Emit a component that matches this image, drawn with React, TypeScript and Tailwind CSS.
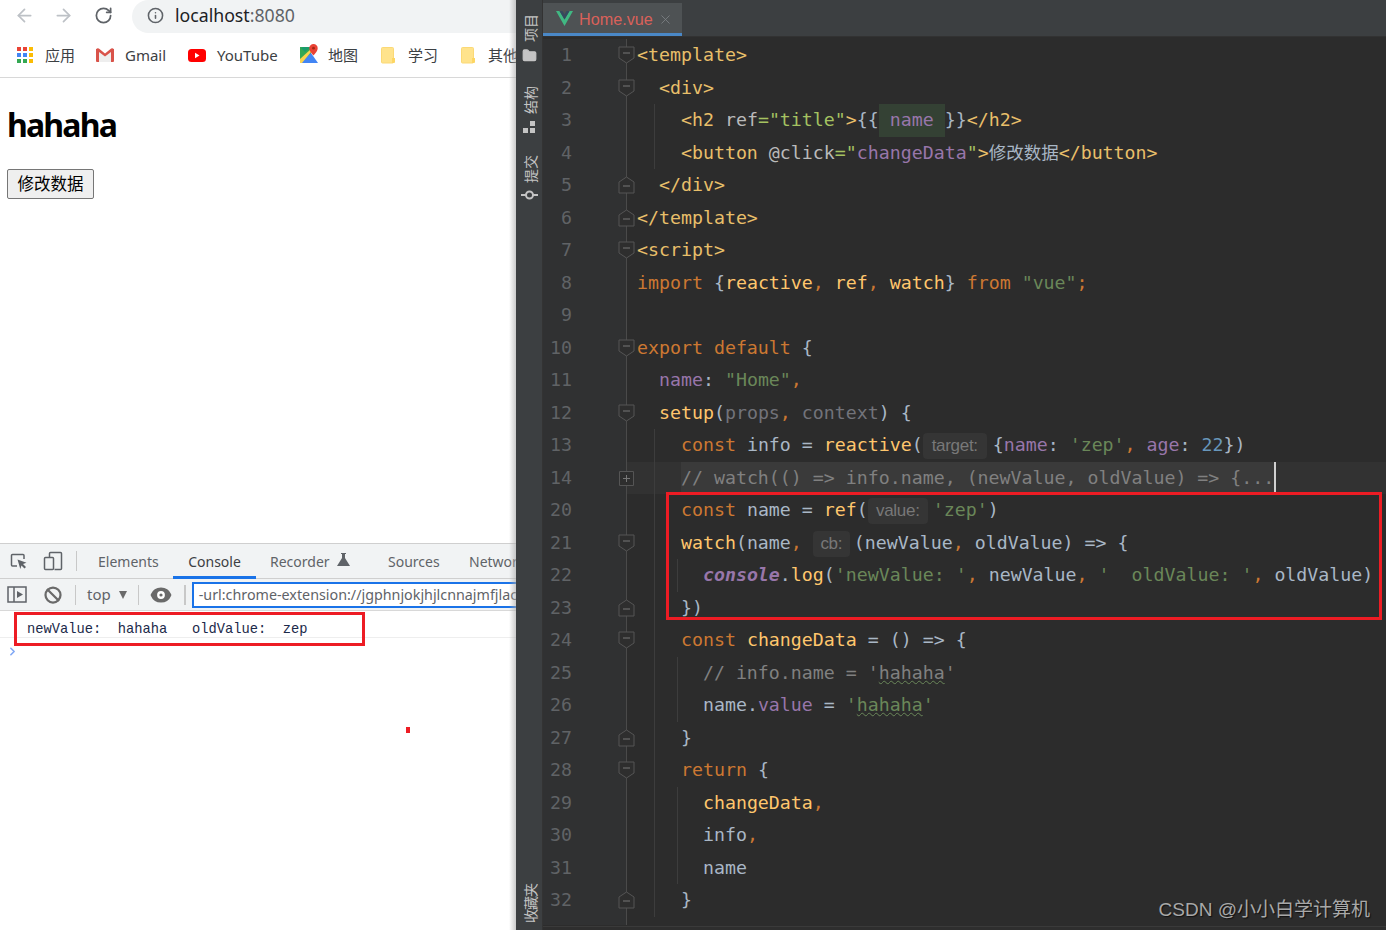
import React from "react";
import { ArrowLeft, ArrowRight, RotateCw, Info, Ban, Eye, ChevronRight, X, Folder } from "lucide-react";

const tag = "text-[#e8bf6a]";
const attr = "text-[#bababa]";
const htmlStr = "text-[#a5c261]";
const kw = "text-[#cc7832]";
const id = "text-[#a9b7c6]";
const fn = "text-[#ffc66d]";
const str = "text-[#6a8759]";
const prop = "text-[#9876aa]";
const num = "text-[#6897bb]";
const dim = "text-[#72737a]";
const cmt = "text-[#808080]";

type Tok = [string, string] | { hint: string; w: string };
type Row = {
  n: number;
  fold?: "open" | "close" | "plus";
  g1?: boolean;
  g2?: boolean;
  active?: boolean;
  toks: Tok[];
};

const rows: Row[] = [
  { n: 1, fold: "open", toks: [["<template>", tag]] },
  { n: 2, fold: "open", toks: [["  <div>", tag]] },
  {
    n: 3,
    g1: true,
    toks: [
      ["    <h2 ", tag],
      ["ref", attr],
      ["=", htmlStr],
      ['"title"', htmlStr],
      [">", tag],
      ["{{", id],
      [" name ", "inline-block h-[32.5px] leading-[32.5px] bg-[#344134] text-[#9876aa]"],
      ["}}", id],
      ["</h2>", tag],
    ],
  },
  {
    n: 4,
    g1: true,
    toks: [
      ["    <button ", tag],
      ["@click", attr],
      ["=", htmlStr],
      ['"', htmlStr],
      ["changeData", prop],
      ['"', htmlStr],
      [">", tag],
      ["修改数据", id + " text-[17.5px]"],
      ["</button>", tag],
    ],
  },
  { n: 5, fold: "close", toks: [["  </div>", tag]] },
  { n: 6, fold: "close", toks: [["</template>", tag]] },
  { n: 7, fold: "open", toks: [["<script>", tag]] },
  {
    n: 8,
    toks: [
      ["import ", kw],
      ["{", id],
      ["reactive", fn],
      [", ", kw],
      ["ref", fn],
      [", ", kw],
      ["watch", fn],
      ["}", id],
      [" from ", kw],
      ['"vue"', str],
      [";", kw],
    ],
  },
  { n: 9, toks: [] },
  { n: 10, fold: "open", toks: [["export default ", kw], ["{", id]] },
  { n: 11, toks: [["  ", id], ["name", prop], [": ", id], ['"Home"', str], [",", kw]] },
  {
    n: 12,
    fold: "open",
    toks: [
      ["  ", id],
      ["setup", fn],
      ["(", id],
      ["props", dim],
      [", ", kw],
      ["context", dim],
      [") {", id],
    ],
  },
  {
    n: 13,
    g1: true,
    toks: [
      ["    ", id],
      ["const ", kw],
      ["info = ", id],
      ["reactive", fn],
      ["(", id],
      { hint: "target:", w: "w-[64px] mr-[6px]" },
      ["{", id],
      ["name", prop],
      [": ", id],
      ["'zep'", str],
      [", ", kw],
      ["age", prop],
      [": ", id],
      ["22", num],
      ["})", id],
    ],
  },
  {
    n: 14,
    fold: "plus",
    g1: true,
    active: true,
    toks: [
      ["    ", id],
      [
        "// watch(() => info.name, (newValue, oldValue) => {...",
        "inline-block h-[32.5px] leading-[32.5px] bg-[#3a3a3a] text-[#808080] border-r-2 border-r-[#d0d0d0]",
      ],
    ],
  },
  {
    n: 20,
    g1: true,
    toks: [
      ["    ", id],
      ["const ", kw],
      ["name = ", id],
      ["ref", fn],
      ["(", id],
      { hint: "value:", w: "w-[60px] mr-[5px]" },
      ["'zep'", str],
      [")", id],
    ],
  },
  {
    n: 21,
    fold: "open",
    g1: true,
    toks: [
      ["    ", id],
      ["watch", fn],
      ["(name", id],
      [", ", kw],
      { hint: "cb:", w: "w-[37px] mr-[4px]" },
      ["(newValue", id],
      [", ", kw],
      ["oldValue) => {", id],
    ],
  },
  {
    n: 22,
    g1: true,
    g2: true,
    toks: [
      ["      ", id],
      ["console", "text-[#9876aa] italic font-bold"],
      [".", id],
      ["log", fn],
      ["(", id],
      ["'newValue: '", str],
      [", ", kw],
      ["newValue", id],
      [", ", kw],
      ["'  oldValue: '", str],
      [", ", kw],
      ["oldValue)", id],
    ],
  },
  { n: 23, fold: "close", g1: true, toks: [["    })", id]] },
  {
    n: 24,
    fold: "open",
    g1: true,
    toks: [["    ", id], ["const ", kw], ["changeData", fn], [" = () => {", id]],
  },
  {
    n: 25,
    g1: true,
    g2: true,
    toks: [
      ["      // info.name = ", cmt],
      ["'", cmt],
      ["hahaha", "text-[#808080] underline decoration-wavy decoration-[#6a8759] decoration-1"],
      ["'", cmt],
    ],
  },
  {
    n: 26,
    g1: true,
    g2: true,
    toks: [
      ["      name", id],
      [".", id],
      ["value", prop],
      [" = ", id],
      ["'", str],
      ["hahaha", "text-[#6a8759] underline decoration-wavy decoration-[#6a8759] decoration-1"],
      ["'", str],
    ],
  },
  { n: 27, fold: "close", g1: true, toks: [["    }", id]] },
  { n: 28, fold: "open", g1: true, toks: [["    ", id], ["return ", kw], ["{", id]] },
  { n: 29, g1: true, g2: true, toks: [["      ", id], ["changeData", fn], [",", kw]] },
  { n: 30, g1: true, g2: true, toks: [["      info", id], [",", kw]] },
  { n: 31, g1: true, g2: true, toks: [["      name", id]] },
  { n: 32, fold: "close", g1: true, toks: [["    }", id]] },
];

function FoldMark({ kind }: { kind: "open" | "close" | "plus" }) {
  return (
    <svg width="17" height="20" viewBox="0 0 17 20" className="absolute left-[-8px] top-[6px]">
      {kind === "open" && <path d="M1 2h15v11l-7.5 5L1 13z" fill="#2e2e2e" stroke="#555" />}
      {kind === "close" && <path d="M1 18h15V7L8.5 2 1 7z" fill="#2e2e2e" stroke="#555" />}
      {kind === "plus" && <path d="M1.500 3.500h14v14h-14z" fill="#2e2e2e" stroke="#555" />}
      <path d={kind === "open" ? "M5 8h7" : kind === "close" ? "M5 11h7" : "M5 10.500h7"} stroke="#777" />
      {kind === "plus" && <path d="M8.500 7v7" stroke="#777" />}
    </svg>
  );
}

function CodeRow({ row }: { row: Row }) {
  return (
    <div className="flex h-[32.5px] shrink-0 leading-[32.5px]">
      <div className="w-[83px] shrink-0 bg-[#303132] text-[#606366]">
        <div className="w-[29px] text-right">{row.n}</div>
      </div>
      <div className={"relative flex-1 pl-[11px] whitespace-pre " + (row.active ? "bg-[#323232]" : "")}>
        <div className="absolute left-0 top-0 h-full w-px bg-[#4a4a4a]" />
        {row.fold && <FoldMark kind={row.fold} />}
        {row.g1 && <div className="absolute left-[28px] top-0 h-full w-px bg-[#3d3d3d]" />}
        {row.g2 && <div className="absolute left-[51px] top-0 h-full w-px bg-[#3d3d3d]" />}
        <span className="relative">
          {row.toks.map((t, i) =>
            Array.isArray(t) ? (
              <span key={i} className={t[1]}>
                {t[0]}
              </span>
            ) : (
              <span
                key={i}
                className={
                  "inline-block h-[26px] rounded-[4px] bg-[#353535] text-center align-middle font-['Liberation_Sans',sans-serif] text-[17px] leading-[26px] tracking-[-0.3px] text-[#787878] " +
                  t.w
                }
              >
                {t.hint}
              </span>
            ),
          )}
        </span>
      </div>
    </div>
  );
}

function SideLabel({ text, className }: { text: string; className?: string }) {
  return (
    <div
      className={
        "translate-x-[1px] rotate-180 font-['Noto_Sans_CJK_SC',sans-serif] text-[14px] leading-[16px] text-[#c4c4c4] [text-orientation:sideways] [writing-mode:vertical-rl] " +
        (className ?? "")
      }
    >
      {text}
    </div>
  );
}

function FolderMark() {
  return (
    <svg width="16" height="18" viewBox="0 0 16 18" className="shrink-0">
      <path d="M1.500 2.500a1 1 0 0 1 1-1h10a1 1 0 0 1 1 1V16a1 1 0 0 1-1 1h-10a1 1 0 0 1-1-1z" fill="#ffe38c" stroke="#fbd976" />
      <path d="M12 12h3v4a1 1 0 0 1-1 1h-2z" fill="#fdd663" />
    </svg>
  );
}

function Bookmark({ icon, label, className }: { icon: React.ReactNode; label: string; className: string }) {
  return (
    <div className={"flex shrink-0 items-center " + className}>
      {icon}
      <span>{label}</span>
    </div>
  );
}

export default function App() {
  return (
    <div className="relative flex h-[930px] w-[1386px] overflow-hidden bg-white font-['Noto_Sans','Noto_Sans_CJK_SC',sans-serif]">
      {/* browser + devtools */}
      <div className="relative flex w-[516px] shrink-0 flex-col overflow-hidden">
        <div className="flex h-[33px] shrink-0 items-center">
          <ArrowLeft size={21} className="ml-[14px] -mt-[2px] text-[#bdc1c6]" strokeWidth={2} />
          <ArrowRight size={21} className="ml-[18px] -mt-[2px] text-[#bdc1c6]" strokeWidth={2} />
          <RotateCw size={19} className="ml-[20px] -mt-[2px] text-[#5f6368]" strokeWidth={2.2} />
          <div className="ml-[19px] flex h-[33px] flex-1 items-center rounded-l-[17px] bg-[#f1f3f4] pb-[3px] pl-[15px]">
            <Info size={17} className="text-[#5f6368]" strokeWidth={2.2} />
            <span className="ml-[11px] text-[17.700px] leading-[30px] text-[#202124]">
              localhost<span className="text-[#5f6368]">:8080</span>
            </span>
          </div>
        </div>

        <div className="flex h-[45px] shrink-0 items-center whitespace-nowrap border-b border-[#d8d8d8] pl-[17px] text-[15px] text-[#3c4043]">
          <Bookmark
            className="w-[79px] gap-[12px]"
            label="应用"
            icon={
              <svg width="16" height="16" viewBox="0 0 16 16">
                <rect width="4" height="4" fill="#ea4335" />
                <rect x="6" width="4" height="4" fill="#ea4335" />
                <rect x="12" width="4" height="4" fill="#fbbc04" />
                <rect y="6" width="4" height="4" fill="#4285f4" />
                <rect x="6" y="6" width="4" height="4" fill="#4285f4" />
                <rect x="12" y="6" width="4" height="4" fill="#fbbc04" />
                <rect y="12" width="4" height="4" fill="#34a853" />
                <rect x="6" y="12" width="4" height="4" fill="#34a853" />
                <rect x="12" y="12" width="4" height="4" fill="#fbbc04" />
              </svg>
            }
          />
          <Bookmark
            className="w-[92px] gap-[11px]"
            label="Gmail"
            icon={
              <svg width="18" height="14" viewBox="0 0 18 14">
                <path d="M0 1h3v13H1a1 1 0 0 1-1-1z" fill="#d9534a" />
                <path d="M15 1h3v12a1 1 0 0 1-1 1h-2z" fill="#d9534a" />
                <path d="M0 1.500C1 0 2.500 0 3.500 1L9 5.500 14.500 1C15.500 0 17 0 18 1.500V3L9 9.500 0 3z" fill="#d9534a" />
                <path d="M3 4l6 4.500L15 4v10H3z" fill="#eeeeee" />
              </svg>
            }
          />
          <Bookmark
            className="w-[112px] gap-[11px]"
            label="YouTube"
            icon={
              <svg width="18" height="13" viewBox="0 0 18 13">
                <rect width="18" height="13" rx="3.500" fill="#ff0000" />
                <path d="M7 3.800v5.400l4.500-2.700z" fill="#ffffff" />
              </svg>
            }
          />
          <Bookmark
            className="w-[80px] gap-[10px]"
            label="地图"
            icon={
              <svg width="18" height="19" viewBox="0 0 18 19" className="-mt-[3px]">
                <path d="M0 3h11v16H0z" fill="#34a853" />
                <path d="M0 19l11-10 7 10z" fill="#4285f4" />
                <path d="M0 15L11 5v3L2 19H0z" fill="#fbd34d" />
                <path d="M3 3h8L5 8 1 4z" fill="#1a9c6b" />
                <path d="M13.500 0a4.200 4.200 0 0 0-4.200 4.200c0 3 4.200 7.300 4.200 7.300s4.200-4.300 4.200-7.300A4.200 4.200 0 0 0 13.500 0z" fill="#ea4335" />
                <circle cx="13.500" cy="4.200" r="1.400" fill="#a52714" />
              </svg>
            }
          />
          <Bookmark className="w-[80px] gap-[12px]" label="学习" icon={<FolderMark />} />
          <Bookmark className="gap-[12px]" label="其他" icon={<FolderMark />} />
        </div>

        <div className="h-[465px] shrink-0 pl-[7px] pt-[24px]">
          <h2 className="text-[32px] font-bold leading-[46px] tracking-[-1.8px] text-black">hahaha</h2>
          <button className="mt-[21px] flex h-[30px] w-[87px] items-center justify-center rounded-[2px] border border-[#767676] bg-[#efefef] text-[16.500px] text-black">
            修改数据
          </button>
        </div>

        {/* devtools tabs */}
        <div className="flex h-[36px] shrink-0 items-center whitespace-nowrap border-y border-[#cfcfcf] bg-[#f1f3f4] text-[14px] text-[#5f6368]">
          <svg width="18" height="18" viewBox="0 0 18 18" className="ml-[10px] shrink-0" fill="none" stroke="#5f6368" strokeWidth="1.500">
            <path d="M7 14H2.500a1 1 0 0 1-1-1V3.500a1 1 0 0 1 1-1H13a1 1 0 0 1 1 1V7" />
            <path d="M7.500 7.500l9 3.200-3.500 1.300 3 3-1.500 1.500-3-3-1.200 3.500z" fill="#5f6368" stroke="none" />
          </svg>
          <svg width="20" height="20" viewBox="0 0 20 20" className="ml-[15px] shrink-0" fill="none" stroke="#5f6368" strokeWidth="1.500">
            <path d="M6.500 6V2.500a1 1 0 0 1 1-1h10a1 1 0 0 1 1 1v15a1 1 0 0 1-1 1h-6" />
            <rect x="1.500" y="6.500" width="9" height="12" rx="1" />
          </svg>
          <div className="ml-[13px] h-[20px] w-px shrink-0 bg-[#c8c8c8]" />
          <span className="ml-[21px] w-[75px] shrink-0">Elements</span>
          <div className="relative flex h-full w-[83px] shrink-0 items-center justify-center text-[#3c4043]">
            Console
            <div className="absolute bottom-[-1px] left-0 h-[3px] w-full bg-[#1a73e8]" />
          </div>
          <span className="ml-[14px] w-[60px] shrink-0">Recorder</span>
          <svg width="13" height="13" viewBox="0 0 13 13" className="ml-[7px] -mt-[3px] shrink-0">
            <path d="M4 0h5v1H8v4l5 8H0l5-8V1H4z" fill="#5f6368" />
          </svg>
          <span className="ml-[38px] w-[52px] shrink-0">Sources</span>
          <span className="ml-[29px] shrink-0">Network</span>
        </div>

        {/* console toolbar */}
        <div className="flex h-[32px] shrink-0 items-center whitespace-nowrap border-b border-[#d8d8d8] bg-[#f1f3f4] text-[#5f6368]">
          <svg width="20" height="17" viewBox="0 0 20 17" className="ml-[7px] shrink-0" fill="none" stroke="#5f6368" strokeWidth="1.500">
            <rect x="1" y="1" width="18" height="15" />
            <path d="M7 1v15" />
            <path d="M10 5l6 3.500-6 3.500z" fill="#5f6368" stroke="none" />
          </svg>
          <Ban size={18} strokeWidth={3} className="ml-[17px] shrink-0 text-[#6a6a6a]" />
          <div className="ml-[13px] h-[20px] w-px shrink-0 bg-[#c8c8c8]" />
          <span className="ml-[11px] text-[15px]">top</span>
          <svg width="10" height="8" viewBox="0 0 10 8" className="ml-[7px] shrink-0">
            <path d="M1 0h8L5 8z" fill="#6a6a6a" />
          </svg>
          <div className="ml-[10px] h-[20px] w-px shrink-0 bg-[#c8c8c8]" />
          <Eye size={22} strokeWidth={2.500} className="ml-[11px] shrink-0 fill-[#6a6a6a] text-[#6a6a6a] [&>circle]:stroke-white" />
          <div className="ml-[12px] h-[20px] w-[2px] shrink-0 bg-[#c8c8c8]" />
          <div className="ml-[6px] flex h-[26px] flex-1 items-center overflow-hidden border-2 border-r-0 border-[#1a73e8] bg-white pl-[5px] text-[14.300px] text-[#5f6368]">
            -url:chrome-extension://jgphnjokjhjlcnnajmfjlacj
          </div>
        </div>

        <div className="h-[27px] shrink-0 border-b border-[#eeeeee] pl-[27px] pt-[12px] font-['Liberation_Mono',monospace] text-[13.750px] leading-[14px] whitespace-pre text-[#1c2a4a]">
          newValue:  hahaha   oldValue:  zep
        </div>
        <ChevronRight size={13} strokeWidth={3} className="ml-[6px] mt-[7px] text-[#82a9f5]" />

        {/* edge shadow of the IDE window */}
        <div className="absolute inset-y-0 right-0 w-[7px] bg-gradient-to-r from-transparent to-[#a8a8a8]/60" />
      </div>

      {/* tool strip */}
      <div className="flex w-[27px] shrink-0 flex-col items-center border-r border-[#333] bg-[#3c3f41] pt-[14px]">
        <SideLabel text="项目" />
        <Folder size={15} className="mt-[6px] fill-[#c4c4c4] text-[#c4c4c4]" />
        <SideLabel text="结构" className="mt-[23px]" />
        <svg width="13" height="13" viewBox="0 0 13 13" className="mt-[7px]">
          <rect x="7" width="5" height="5" fill="#c4c4c4" />
          <rect y="7" width="5" height="5" fill="#c4c4c4" />
          <rect x="7" y="7" width="5" height="5" fill="#c4c4c4" />
        </svg>
        <SideLabel text="提交" className="mt-[21px]" />
        <svg width="17" height="12" viewBox="0 0 17 12" className="mt-[6px]" fill="none" stroke="#c4c4c4" strokeWidth="2">
          <circle cx="8.500" cy="6" r="3.500" />
          <path d="M0 6h5M12 6h5" />
        </svg>
        <SideLabel text="收藏夹" className="mt-auto mb-[7px] tracking-[-1px]" />
      </div>

      {/* editor */}
      <div className="relative flex min-w-0 flex-1 flex-col overflow-hidden bg-[#2c2c2c] font-['DejaVu_Sans_Mono','Noto_Sans_CJK_SC',monospace] text-[18.250px]">
        <div className="flex h-[37px] shrink-0 items-end border-b border-[#323232] bg-[#3c3f41]">
          <div className="flex h-[33px] w-[139px] items-center border-b-[3px] border-[#4a88c7] bg-[#4e5254] pl-[13px] pt-[3px] font-['Liberation_Sans',sans-serif] text-[16.200px] text-[#d9615a]">
            <svg width="17" height="15" viewBox="0 0 17 15" className="-mt-[2px] shrink-0">
              <path d="M0 0h3.500l5 8.500L13.500 0H17L8.500 15z" fill="#41b883" />
              <path d="M3.500 0h3l2 3.500L10.500 0h3l-5 8.500z" fill="#35495e" />
            </svg>
            <span className="ml-[6px]">Home.vue</span>
            <X size={15} strokeWidth={1.3} className="ml-[5px] shrink-0 text-[#7f8386]" />
          </div>
        </div>
        <div className="flex flex-col pt-[2px]">
          {rows.map((row) => (
            <CodeRow key={row.n} row={row} />
          ))}
          <div className="flex h-[8px] shrink-0 overflow-hidden leading-[32.5px]">
            <div className="w-[83px] shrink-0 bg-[#303132]" />
            <div className="relative flex-1 pl-[11px] whitespace-pre text-[#a9b7c6]">
              <div className="absolute left-0 top-0 h-full w-px bg-[#4a4a4a]" />
              {"  }"}
            </div>
          </div>
        </div>

        <div className="absolute inset-x-0 bottom-0 h-[4px] border-t border-[#3a3a3a] bg-[#2e2e2e]" />
        <div className="absolute bottom-[8px] right-[16px] font-['Liberation_Sans','Noto_Sans_CJK_SC',sans-serif] text-[19px] leading-[24px] text-[#a8a8a8] [text-shadow:1px_1px_1px_#111]">
          CSDN @小小白学计算机
        </div>
      </div>

      {/* red annotation boxes */}
      <div className="absolute left-[14px] top-[612px] h-[34px] w-[351px] border-[3px] border-[#ed1c24]" />
      <div className="absolute left-[406px] top-[727px] h-[6px] w-[4px] bg-[#ed1c24]" />
      <div className="absolute left-[666px] top-[492px] h-[128px] w-[716px] border-[3px] border-[#ed1c24]" />
    </div>
  );
}
